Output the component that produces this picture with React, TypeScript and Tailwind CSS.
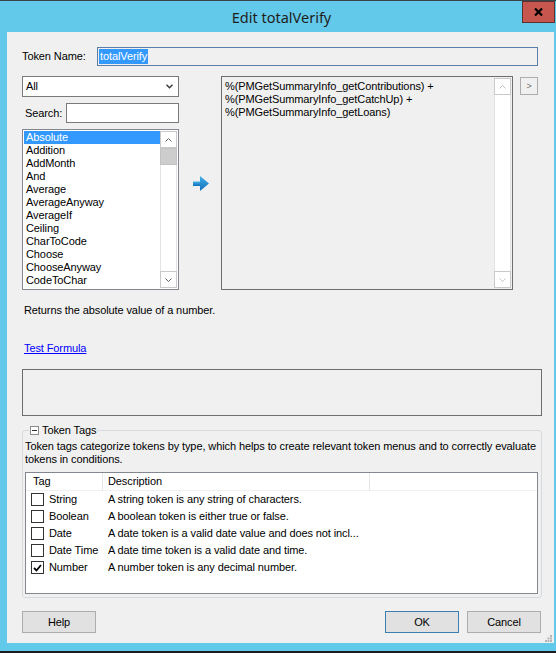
import React from 'react'

const functions = [
  'Absolute',
  'Addition',
  'AddMonth',
  'And',
  'Average',
  'AverageAnyway',
  'AverageIf',
  'Ceiling',
  'CharToCode',
  'Choose',
  'ChooseAnyway',
  'CodeToChar'
]

const tags = [
  { name: 'String', desc: 'A string token is any string of characters.', checked: false },
  { name: 'Boolean', desc: 'A boolean token is either true or false.', checked: false },
  { name: 'Date', desc: 'A date token is a valid date value and does not incl...', checked: false },
  { name: 'Date Time', desc: 'A date time token is a valid date and time.', checked: false },
  { name: 'Number', desc: 'A number token is any decimal number.', checked: true }
]

function Chevron({ dir, color }: { dir: 'up' | 'down'; color: string }) {
  return (
    <svg width="7" height="4" viewBox="0 0 7 4" fill="none" stroke={color} strokeWidth="1">
      {dir === 'up' ? <path d="M0.5 3.5 L3.5 0.5 L6.5 3.5" /> : <path d="M0.5 0.5 L3.5 3.5 L6.5 0.5" />}
    </svg>
  )
}

function ScrollBar({ disabled = false }: { disabled?: boolean }) {
  const color = disabled ? '#c4c4c4' : '#606060'
  return (
    <div className="flex w-[17px] shrink-0 flex-col bg-white">
      <div className="grid h-[17px] place-items-center border border-[#c9c9c9]">
        <Chevron dir="up" color={color} />
      </div>
      {disabled ? null : <div className="h-[17px] border border-[#c2c2c2] bg-[#cdcdcd]" />}
      <div className="flex-1 border-x border-[#e3e3e3]" />
      <div className="grid h-[17px] place-items-center border border-[#c9c9c9]">
        <Chevron dir="down" color={color} />
      </div>
    </div>
  )
}

function CheckBox({ checked }: { checked: boolean }) {
  return (
    <span className="grid h-[13px] w-[13px] shrink-0 place-items-center border border-[#333333] bg-white">
      {checked ? (
        <svg width="9" height="8" viewBox="0 0 9 8" fill="none" stroke="#000" strokeWidth="1.8">
          <path d="M1 4 L3.5 6.5 L8 1" />
        </svg>
      ) : null}
    </span>
  )
}

function DialogButton({ children, primary = false }: { children: React.ReactNode; primary?: boolean }) {
  return (
    <button
      type="button"
      className={
        'h-[22px] w-[74px] border bg-[#e1e1e1] text-center text-[11px] text-black ' +
        (primary ? 'border-[#3c7fb1]' : 'border-[#adadad]')
      }
    >
      {children}
    </button>
  )
}

export default function App() {
  return (
    <div className="flex h-[653px] w-[556px] flex-col overflow-hidden bg-[#63c9ea] font-['Liberation_Sans',Arial,sans-serif] text-[11px] leading-[13px] tracking-[-0.1px] text-black">
      <div className="h-px shrink-0 bg-[#3a4448]" />

      {/* title bar */}
      <div className="flex h-[31px] shrink-0 items-center">
        <div className="w-[34px]" />
        <div className="flex flex-1 justify-center pl-[7px] font-['Noto_Sans',sans-serif] text-[14.5px] leading-[20px] tracking-normal text-[#1e1e1e]">
          Edit totalVerify
        </div>
        <div className="mr-px grid h-[22px] w-[33px] place-items-center self-start border border-[#5c302c] bg-[#c7564f]">
          <svg width="9" height="8" viewBox="0 0 9 8" stroke="#000" strokeWidth="2.2">
            <path d="M1 0.5 L8 7.5 M8 0.5 L1 7.5" />
          </svg>
        </div>
      </div>

      {/* client area */}
      <div className="ml-[7px] mr-[2px] flex h-[611px] shrink-0 flex-col bg-[#f0f0f0]">
        {/* token name */}
        <div className="mt-[15px] flex h-[19px] items-center pl-[15px]">
          <span className="w-[75px]">Token Name:</span>
          <div className="flex h-[19px] w-[441px] items-center border border-[#5a7ea8] bg-[#f0f0f0] pl-px">
            <span className="bg-[#3399ff] px-px leading-[15px] text-white">totalVerify</span>
          </div>
        </div>

        {/* function picker + formula */}
        <div className="mt-[10px] flex h-[214px] pl-[15px]">
          <div className="flex w-[157px] flex-col">
            <div className="flex h-[21px] items-center justify-between border border-[#7a7a7a] bg-white pl-[3px] pr-[5px]">
              <span>All</span>
              <svg width="7" height="5" viewBox="0 0 7 5" fill="none" stroke="#3c3c3c" strokeWidth="1.5">
                <path d="M0.5 0.8 L3.5 3.8 L6.5 0.8" />
              </svg>
            </div>
            <div className="mt-[6px] flex h-[20px] items-center">
              <span className="ml-[3px] w-[41px]">Search:</span>
              <div className="h-[20px] w-[113px] border border-[#7a7a7a] bg-white" />
            </div>
            <div className="mt-[6px] flex h-[161px] border border-[#828790] bg-white p-px">
              <div className="flex flex-1 flex-col">
                {functions.map((f, i) => (
                  <div
                    key={f}
                    className={'h-[13px] whitespace-nowrap pl-[2px] ' + (i === 0 ? 'bg-[#3399ff] text-white' : '')}
                  >
                    {f}
                  </div>
                ))}
              </div>
              <ScrollBar />
            </div>
          </div>

          <div className="flex w-[42px] items-center pl-[14px]">
            <svg width="16" height="15" viewBox="0 0 16 15">
              <defs>
                <linearGradient id="arr" x1="0" y1="0" x2="0" y2="1">
                  <stop offset="0" stopColor="#45b0ea" />
                  <stop offset="1" stopColor="#0f70b8" />
                </linearGradient>
              </defs>
              <rect x="0" y="5.5" width="8" height="4.5" fill="url(#arr)" />
              <path d="M7 0 L16 7.5 L7 15 Z" fill="url(#arr)" />
            </svg>
          </div>

          <div className="flex h-[214px] w-[292px] border border-[#6e6e6e] bg-[#f0f0f0] p-px">
            <div className="flex-1 whitespace-nowrap pl-[2px] pt-[2px]">
              <div>%(PMGetSummaryInfo_getContributions) +</div>
              <div>%(PMGetSummaryInfo_getCatchUp) +</div>
              <div>%(PMGetSummaryInfo_getLoans)</div>
            </div>
            <ScrollBar disabled />
          </div>

          <div className="ml-[7px] mt-px grid h-[18px] w-[18px] place-items-center border border-[#adadad] bg-[#f0f0f0] text-[9px] leading-[9px] text-[#707070]">
            &gt;
          </div>
        </div>

        <div className="ml-[17px] mt-[14px]">Returns the absolute value of a number.</div>

        <div className="ml-[17px] mt-[25px]">
          <span className="text-[#0000ff] underline">Test Formula</span>
        </div>

        <div className="ml-[15px] mt-[14px] h-[47px] w-[520px] border border-[#6e6e6e]" />

        {/* token tags */}
        <fieldset className="mx-[15px] mt-[8px] w-[520px] min-w-0 rounded-[3px] border border-[#d5dade] px-px pb-[3px]">
          <legend className="ml-[5px] px-px">
            <span className="flex items-center gap-[3px]">
              <span className="grid h-[9px] w-[9px] place-items-center border border-[#8c8c8c] bg-white">
                <span className="h-px w-[5px] bg-[#333]" />
              </span>
              <span>Token Tags</span>
            </span>
          </legend>
          <div className="ml-px mt-[3px] whitespace-nowrap">
            <div>Token tags categorize tokens by type, which helps to create relevant token menus and to correctly evaluate</div>
            <div>tokens in conditions.</div>
          </div>
          <div className="ml-px mr-[2px] mt-[6px] h-[122px] border border-[#828790] bg-white">
            <div className="flex h-[18px] border-b border-[#f0f0f0]">
              <div className="flex w-[77px] items-center border-r border-[#e5e5e5] pl-[7px]">Tag</div>
              <div className="flex w-[267px] items-center border-r border-[#e5e5e5] pl-[5px]">Description</div>
            </div>
            {tags.map((t) => (
              <div key={t.name} className="flex h-[17px] items-center whitespace-nowrap">
                <div className="flex w-[77px] items-center gap-[5px] pl-[5px]">
                  <CheckBox checked={t.checked} />
                  <span>{t.name}</span>
                </div>
                <span className="pl-[5px]">{t.desc}</span>
              </div>
            ))}
          </div>
        </fieldset>

        {/* buttons */}
        <div className="mt-[13px] flex items-center pl-[15px] pr-[13px]">
          <DialogButton>Help</DialogButton>
          <div className="flex-1" />
          <DialogButton primary>OK</DialogButton>
          <div className="w-[8px]" />
          <DialogButton>Cancel</DialogButton>
        </div>

        <div className="mt-auto flex justify-end pb-px pr-[2px]">
          <svg width="7" height="7" viewBox="0 0 7 7" fill="#b5b5b5">
            <rect x="5" y="0" width="2" height="2" />
            <rect x="2.5" y="2.5" width="2" height="2" />
            <rect x="5" y="2.5" width="2" height="2" />
            <rect x="0" y="5" width="2" height="2" />
            <rect x="2.5" y="5" width="2" height="2" />
            <rect x="5" y="5" width="2" height="2" />
          </svg>
        </div>
      </div>

      <div className="h-[8px] shrink-0" />
      <div className="h-[2px] shrink-0 bg-[#1c1c1c]" />
    </div>
  )
}
